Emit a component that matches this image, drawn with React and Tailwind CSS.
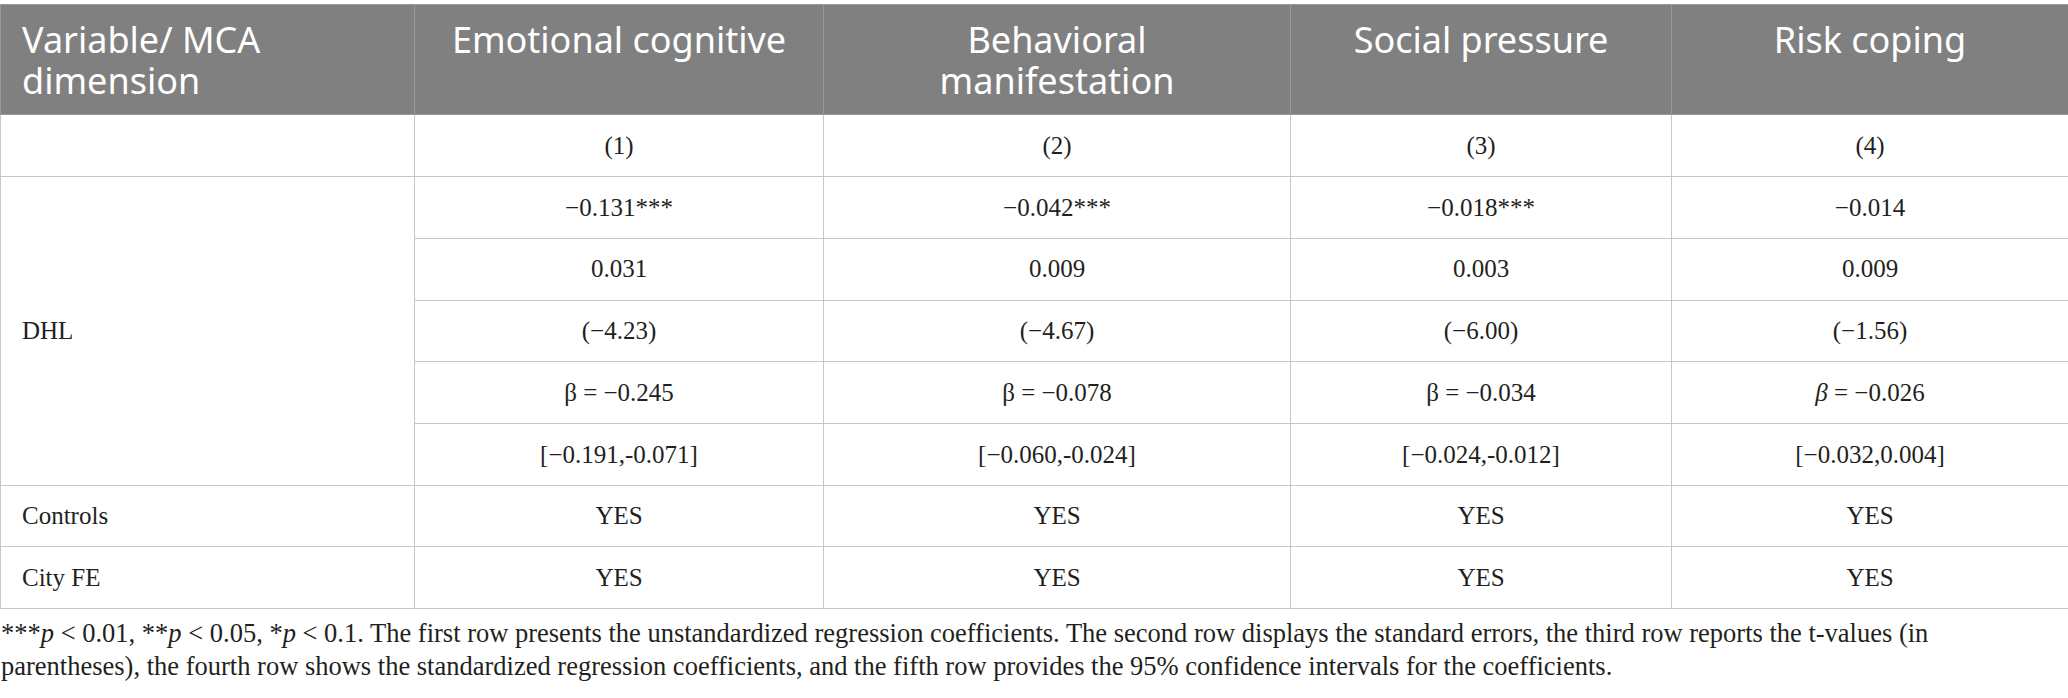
const heads = ["Emotional cognitive", "Behavioral manifestation", "Social pressure", "Risk coping"];

const dhl = [
  ["−0.131***", "−0.042***", "−0.018***", "−0.014"],
  ["0.031", "0.009", "0.003", "0.009"],
  ["(−4.23)", "(−4.67)", "(−6.00)", "(−1.56)"],
  [
    <>β = −0.245</>,
    <>β = −0.078</>,
    <>β = −0.034</>,
    <><i>β</i> = −0.026</>,
  ],
  ["[−0.191,-0.071]", "[−0.060,-0.024]", "[−0.024,-0.012]", "[−0.032,0.004]"],
];

const cell = "border border-[#c6c6c6] text-center align-middle";
const serif = { fontFamily: '"Liberation Serif", "Times New Roman", serif' };

export default function App() {
  return (
    <div className="w-[2068px] h-[698px] bg-white overflow-hidden pt-[4px]">
      <table
        className="w-[2068px] table-fixed border-collapse text-[#231f20] text-[25px]"
        style={serif}
      >
        <colgroup>
          <col className="w-[414px]" />
          <col className="w-[409px]" />
          <col className="w-[467px]" />
          <col className="w-[381px]" />
          <col className="w-[397px]" />
        </colgroup>
        <thead>
          <tr className="h-[110px] bg-[#7f807f] text-white text-[36px] leading-[41px] font-['Noto_Sans',sans-serif]">
            <th className="border border-[#9a9a9a] align-top text-left font-normal pl-[21px] pr-[120px] pt-[14px]">
              Variable/ MCA dimension
            </th>
            {heads.map((h) => (
              <th key={h} className="border border-[#9a9a9a] align-top text-center font-normal px-[30px] pt-[14px]">
                {h}
              </th>
            ))}
          </tr>
        </thead>
        <tbody>
          <tr className="h-[62px]">
            <td className={cell}></td>
            {["(1)", "(2)", "(3)", "(4)"].map((n) => (
              <td key={n} className={cell}>{n}</td>
            ))}
          </tr>
          {dhl.map((row, i) => (
            <tr key={i} className="h-[61.8px]">
              {i === 0 && (
                <td rowSpan={5} className="border border-[#c6c6c6] text-left align-middle pl-[21px]">
                  DHL
                </td>
              )}
              {row.map((v, j) => (
                <td key={j} className={cell}>{v}</td>
              ))}
            </tr>
          ))}
          {["Controls", "City FE"].map((r) => (
            <tr key={r} className="h-[61.5px]">
              <td className="border border-[#c6c6c6] text-left align-middle pl-[21px]">{r}</td>
              {[0, 1, 2, 3].map((j) => (
                <td key={j} className={cell}>YES</td>
              ))}
            </tr>
          ))}
        </tbody>
      </table>
      <p className="mt-[8px] pl-[1px] text-[26.5px] leading-[33px] text-[#231f20] whitespace-nowrap" style={serif}>
        ***<i>p</i> &lt; 0.01, **<i>p</i> &lt; 0.05, *<i>p</i> &lt; 0.1. The first row presents the unstandardized regression
        coefficients. The second row displays the standard errors, the third row reports the t-values (in
        <br />
        parentheses), the fourth row shows the standardized regression coefficients, and the fifth row provides the 95%
        confidence intervals for the coefficients.
      </p>
    </div>
  );
}
